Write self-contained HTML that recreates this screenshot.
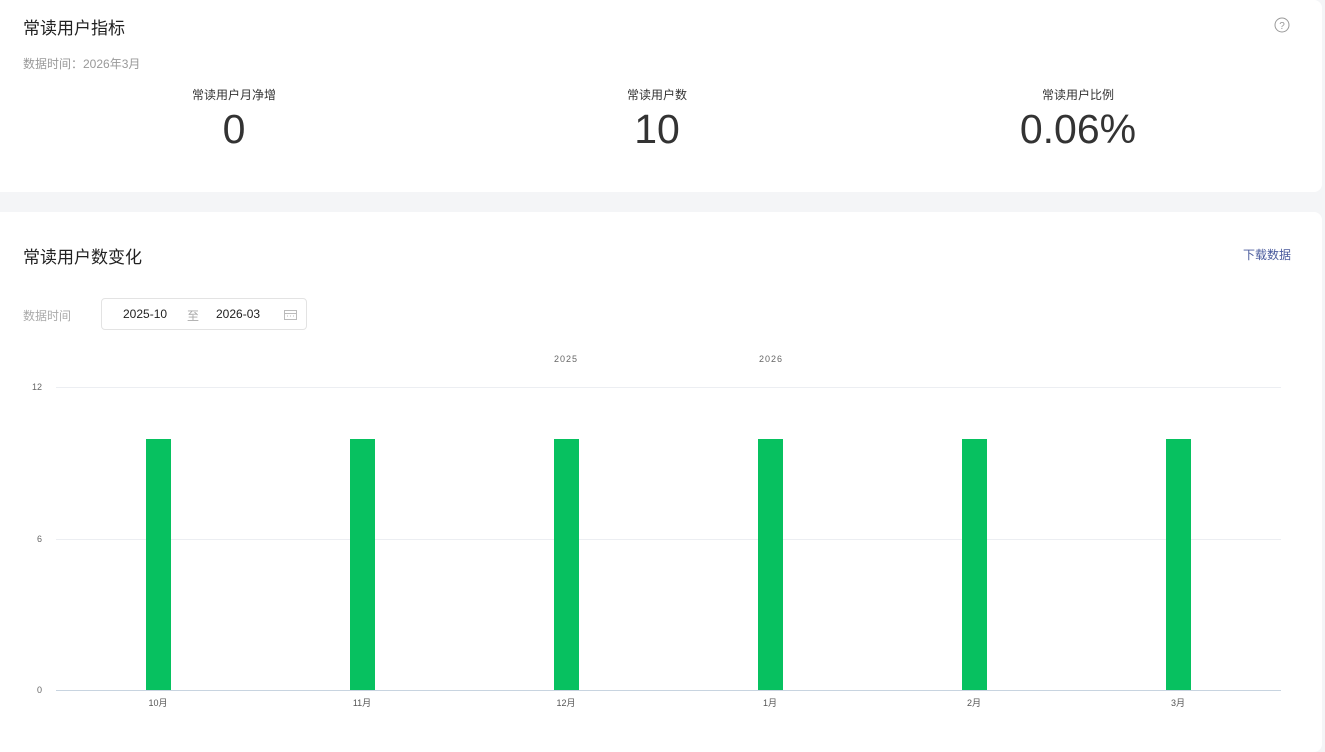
<!DOCTYPE html>
<html><head><meta charset="utf-8"><style>
body{margin:0;width:1325px;height:745px;background:#f4f5f7;font-family:"Liberation Sans","Noto Sans CJK SC",sans-serif;position:relative;overflow:hidden}
.card{position:absolute;left:0;width:1322px;background:#fff;border-radius:0 8px 8px 0}
.a{position:absolute;white-space:nowrap}
.lab{font-size:12px;color:#333;width:200px;text-align:center}
.num{font-size:41px;color:#333;width:300px;text-align:center}
</style></head><body>
<div class="card" style="top:0;height:192px">
<div class="a" style="left:23px;top:14px;font-size:17px;color:#222">常读用户指标</div>
<div class="a" style="left:23px;top:55px;font-size:12px;color:#999">数据时间：2026年3月</div>
<svg class="a" style="left:1274px;top:17px" width="16" height="16"><circle cx="8" cy="8" r="7" fill="none" stroke="#999" stroke-width="1"/><text x="8" y="12" text-anchor="middle" font-size="10" fill="#999" font-family="Liberation Sans">?</text></svg>
<div class="a lab" style="left:134px;top:86px">常读用户月净增</div>
<div class="a num" style="left:84px;top:106px">0</div>
<div class="a lab" style="left:557px;top:86px">常读用户数</div>
<div class="a num" style="left:507px;top:106px">10</div>
<div class="a lab" style="left:978px;top:86px">常读用户比例</div>
<div class="a num" style="left:928px;top:106px">0.06%</div>
</div>
<div class="card" style="top:212px;height:540px">
<div class="a" style="left:23px;top:31px;font-size:17px;color:#222">常读用户数变化</div>
<div class="a" style="left:1243px;top:34px;font-size:12px;color:#4a5b9c">下载数据</div>
<div class="a" style="left:23px;top:95px;font-size:12px;color:#aaa">数据时间</div>
<div class="a" style="left:101px;top:86px;width:204px;height:30px;border:1px solid #e3e3e3;border-radius:4px;font-size:12px">
<span class="a" style="left:21px;top:8px;color:#222">2025-10</span>
<span class="a" style="left:85px;top:8px;color:#aaa">至</span>
<span class="a" style="left:114px;top:8px;color:#222">2026-03</span>
<svg class="a" style="left:182px;top:10px" width="13" height="11"><rect x="0.5" y="1.5" width="12" height="9" fill="none" stroke="#bbb"/><path d="M1 4.5H12M3 7H4M6 7H7M9 7H10" stroke="#bbb"/></svg>
</div>
</div>
<svg class="a" style="left:0;top:0" width="1325" height="745">
<g font-family="Liberation Sans" font-size="9" fill="#666">
<text x="566" y="362" text-anchor="middle" letter-spacing="1">2025</text>
<text x="771" y="362" text-anchor="middle" letter-spacing="1">2026</text>
<text x="42" y="390" text-anchor="end">12</text>
<text x="42" y="542" text-anchor="end">6</text>
<text x="42" y="693" text-anchor="end">0</text>
</g>
<path d="M56 387.5H1281M56 539.5H1281" stroke="#eceef2"/>
<path d="M56 690.5H1281" stroke="#c8d4e0"/>
<g fill="#07c160">
<rect x="146" y="439" width="25" height="251"/><rect x="350" y="439" width="25" height="251"/><rect x="554" y="439" width="25" height="251"/><rect x="758" y="439" width="25" height="251"/><rect x="962" y="439" width="25" height="251"/><rect x="1166" y="439" width="25" height="251"/>
</g>
<g font-family="Liberation Sans,Noto Sans CJK SC,sans-serif" font-size="9" fill="#555" text-anchor="middle">
<text x="158" y="706">10月</text><text x="362" y="706">11月</text><text x="566" y="706">12月</text><text x="770" y="706">1月</text><text x="974" y="706">2月</text><text x="1178" y="706">3月</text>
</g>
</svg>
</body></html>
